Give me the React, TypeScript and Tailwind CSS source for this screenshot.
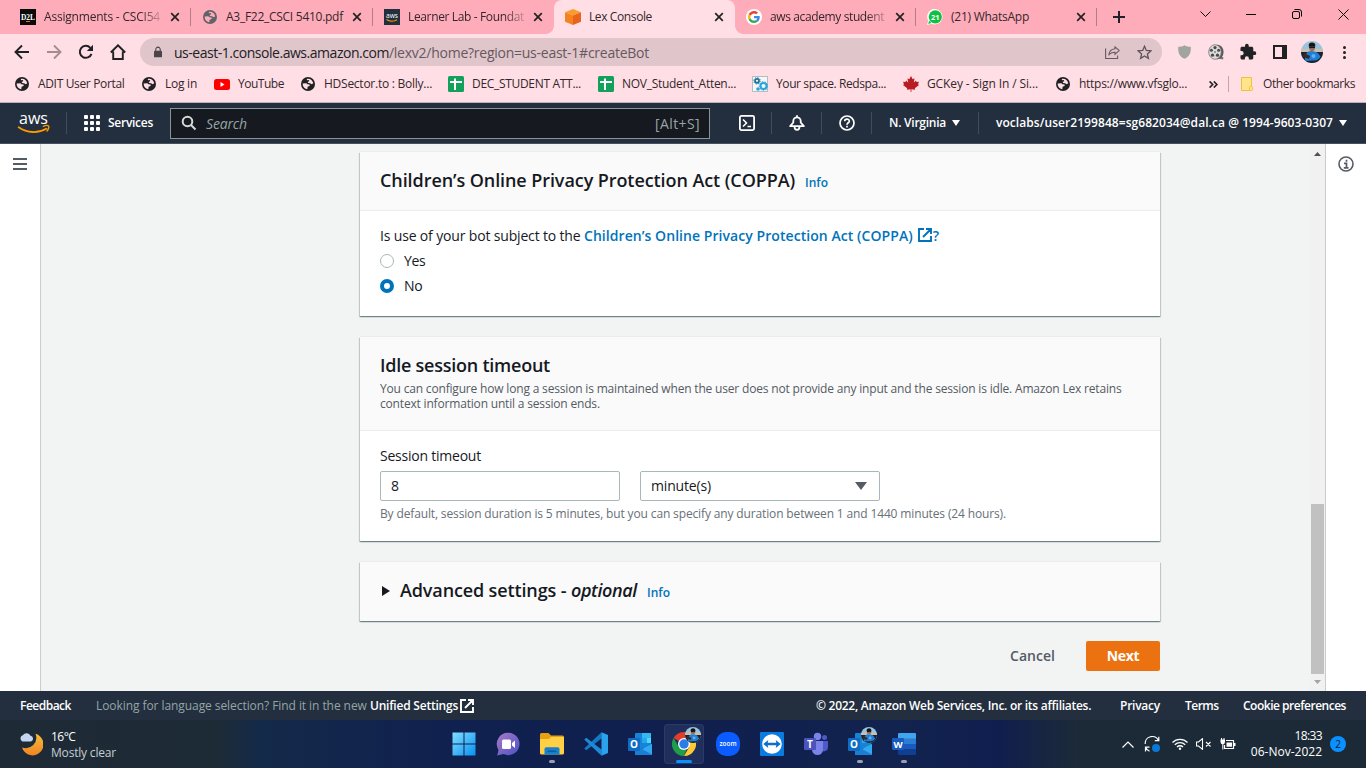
import type { ReactNode } from "react";

type Kid = { children?: ReactNode };

/* ---------- browser icons ---------- */

const Globe = ({ className = "text-[#202124]", land = "#ffdfe5" }: { className?: string; land?: string }) => (
  <svg className={`size-[14px] shrink-0 ${className}`} viewBox="0 0 14 14">
    <circle cx="7" cy="7" r="7" fill="currentColor" />
    <path d="M1.700 6.600L5.200 6.200C6 6.200 6 7.200 6.800 7.300L8.300 7.500C9 7.700 8.900 8.800 8.300 9.100L6.600 9.700 6.300 12.200C3.500 12 1.500 9.500 1.700 6.600zM5.800 1.900C9 1.300 11.700 3.300 12.200 6.200L10.800 7.200 9 6.300 7.300 6C6.600 5.700 6.700 4.700 7.400 4.500L8.300 4.200 7.900 3.100 6 3.300z" fill={land} />
  </svg>
);

const CloseX = () => (
  <svg className="size-2.5 shrink-0" viewBox="0 0 10 10" stroke="#222" strokeWidth="1.7">
    <path d="M1.200 1.200l7.600 7.600M8.800 1.200L1.200 8.800" />
  </svg>
);

const AwsMark = ({ className }: { className: string }) => (
  <svg className={`overflow-visible ${className}`} viewBox="0 0 32 22">
    <text x="1" y="12" textLength="29" lengthAdjust="spacingAndGlyphs" fontSize="16.500" fontWeight="500" fontFamily="Open Sans, sans-serif" fill="#fff">aws</text>
    <path d="M0.700 15.300c8.500 6 19.500 6.200 27.600 1.500" fill="none" stroke="#f90" strokeWidth="1.900" strokeLinecap="round" />
    <path d="M25.300 14.300c2-.9 4.600-.9 5.300-.2.600.8-.1 3.400-1.600 5" fill="none" stroke="#f90" strokeWidth="1.400" strokeLinecap="round" />
  </svg>
);

const D2L = () => (
  <svg className="size-4 shrink-0 overflow-visible" viewBox="0 0 16 16">
    <rect width="16" height="16" fill="#0a0a0a" />
    <text x="1" y="11" textLength="14" lengthAdjust="spacingAndGlyphs" fontSize="8.500" fontWeight="700" fontFamily="Liberation Serif, serif" fill="#fff">D2L</text>
    <rect x="6" y="12" width="4" height="1" fill="#e87511" />
  </svg>
);

const AwsTile = () => (
  <svg className="size-4 shrink-0" viewBox="0 0 16 16">
    <rect width="16" height="16" fill="#232f3e" />
    <text x="2" y="8.500" textLength="12" lengthAdjust="spacingAndGlyphs" fontSize="7" fontFamily="Open Sans, sans-serif" fill="#fff">aws</text>
    <path d="M2.500 10.500c3 2.200 7.500 2.200 10.500.3" fill="none" stroke="#f90" strokeWidth="1.200" />
  </svg>
);

const Cube = () => (
  <svg className="size-4 shrink-0" viewBox="0 0 16 16">
    <path d="M8 0l8 3.200L8 6.400 0 3.200z" fill="#fa9b2c" />
    <path d="M0 3.200l8 3.200V16l-8-3.200z" fill="#f58220" />
    <path d="M16 3.200L8 6.400V16l8-3.200z" fill="#e8631c" />
  </svg>
);

const Google = () => (
  <svg className="size-4 shrink-0" viewBox="0 0 16 16">
    <circle cx="8" cy="8" r="8" fill="#fff" />
    <g transform="translate(2 2) scale(.25)">
      <path fill="#EA4335" d="M24 9.500c3.540 0 6.710 1.220 9.210 3.600l6.850-6.850C35.900 2.380 30.470 0 24 0 14.620 0 6.510 5.380 2.560 13.220l7.980 6.190C12.430 13.720 17.740 9.500 24 9.500z" />
      <path fill="#4285F4" d="M46.980 24.550c0-1.570-.15-3.090-.38-4.550H24v9.020h12.940c-.58 2.960-2.260 5.480-4.780 7.180l7.730 6c4.510-4.180 7.090-10.360 7.090-17.650z" />
      <path fill="#FBBC05" d="M10.530 28.590c-.48-1.450-.76-2.990-.76-4.590s.27-3.140.76-4.590l-7.980-6.190C.92 16.460 0 20.120 0 24c0 3.880.92 7.540 2.560 10.780l7.970-6.190z" />
      <path fill="#34A853" d="M24 48c6.480 0 11.930-2.130 15.890-5.810l-7.730-6c-2.150 1.450-4.920 2.300-8.160 2.300-6.260 0-11.570-4.220-13.470-9.910l-7.980 6.190C6.510 42.620 14.620 48 24 48z" />
    </g>
  </svg>
);

const WhatsApp = () => (
  <svg className="size-4 shrink-0" viewBox="0 0 16 16">
    <path d="M8.300 0a7.700 7.700 0 1 1-3.700 14.700L0 16l1.300-4.400A7.700 7.700 0 0 1 8.300 0z" fill="#fff" />
    <circle cx="8.300" cy="7.800" r="6.600" fill="#0fc143" />
    <path d="M1.200 14.900l1-3.300 2.200 2.400z" fill="#0fc143" />
    <text x="8.300" y="10.600" textAnchor="middle" fontSize="7.500" fontWeight="700" fontFamily="Open Sans, sans-serif" fill="#fff">21</text>
  </svg>
);

const Avatar = ({ className }: { className: string }) => (
  <svg className={className} viewBox="0 0 22 22">
    <defs><clipPath id="av"><circle cx="11" cy="11" r="11" /></clipPath></defs>
    <g clipPath="url(#av)">
      <rect width="22" height="22" fill="#9cc3dd" />
      <rect y="8" width="22" height="4" fill="#c9c0ae" />
      <rect y="11" width="22" height="11" fill="#1c2229" />
      <path d="M4 20c-.5-7 2-10 6.500-10s7.500 2 9 6c-2 3-5 3.500-7 3.500z" fill="#1f7fd6" />
      <path d="M3 12l6 3-1 3-6-2z" fill="#3a2a25" />
      <ellipse cx="11" cy="6.500" rx="3" ry="3.700" fill="#a3705a" />
      <path d="M7.700 5.500C7.500 2.600 9 1.600 11 1.600s3.600 1 3.300 3.900z" fill="#161412" />
      <rect x="8.200" y="5.500" width="5.800" height="1.600" fill="#17181c" />
      <circle cx="12.500" cy="15" r="2" fill="#5fb2f2" />
    </g>
  </svg>
);

const Sheet = () => (
  <svg className="size-4 shrink-0" viewBox="0 0 16 16">
    <rect width="16" height="16" rx="1.500" fill="#12a15b" />
    <path d="M2 6h12M7 2.500v11.500" stroke="#fff" strokeWidth="2" />
  </svg>
);

/* ---------- browser chrome ---------- */

const Tab = ({ className, icon, children, fade }: Kid & { className: string; icon: ReactNode; fade?: boolean }) => (
  <div className={`flex h-[34px] shrink-0 items-center pr-[11px] text-[12px] text-[#33272b] ${className}`}>
    <span className="flex w-4 shrink-0 justify-center">{icon}</span>
    <span className={`ml-2 flex-1 overflow-hidden whitespace-nowrap ${fade ? "[mask-image:linear-gradient(90deg,#000_96px,transparent_122px)]" : ""}`}>{children}</span>
    <CloseX />
  </div>
);

const TabStrip = () => (
  <div className="flex h-[34px] bg-[#ffacba]">
    <Tab className="relative w-[191px] pl-5 after:absolute after:right-0 after:top-2 after:h-[18px] after:w-px after:bg-[#b37c86]" icon={<D2L />} fade>
      <span className="tracking-[-0.2px]">Assignments - CSCI54</span>
    </Tab>
    <Tab className="relative w-[182px] pl-[11px] after:absolute after:right-0 after:top-2 after:h-[18px] after:w-px after:bg-[#b37c86]" icon={<Globe className="text-[#5f6368]" land="#ffacba" />}>
      <span className="tracking-[-0.27px]">A3_F22_CSCI 5410.pdf</span>
    </Tab>
    <Tab className="w-[181px] pl-[11px]" icon={<AwsTile />} fade>
      <span className="tracking-[-0.36px]">Learner Lab - Foundat</span>
    </Tab>
    <div className="relative flex">
      <Tab className="w-[181px] rounded-t-lg bg-[#ffdfe5] pl-[11px]" icon={<Cube />}>
        <span className="tracking-[-0.39px]">Lex Console</span>
      </Tab>
      <span className="absolute -left-2 bottom-0 size-2 bg-[radial-gradient(circle_at_0_0,#ffacba_7.5px,#ffdfe5_8px)]" />
      <span className="absolute -right-2 bottom-0 size-2 bg-[radial-gradient(circle_at_100%_0,#ffacba_7.5px,#ffdfe5_8px)]" />
    </div>
    <Tab className="relative w-[181px] pl-[11px] after:absolute after:right-0 after:top-2 after:h-[18px] after:w-px after:bg-[#b37c86]" icon={<Google />} fade>
      <span className="tracking-[-0.38px]">aws academy student</span>
    </Tab>
    <Tab className="relative w-[181px] pl-[11px] after:absolute after:right-0 after:top-2 after:h-[18px] after:w-px after:bg-[#b37c86]" icon={<WhatsApp />}>
      <span className="tracking-[-0.25px]">(21) WhatsApp</span>
    </Tab>
    <div className="flex w-11 items-center justify-center">
      <svg className="size-3" viewBox="0 0 12 12" stroke="#202124" strokeWidth="2"><path d="M6 0v12M0 6h12" /></svg>
    </div>
    <div className="ml-auto flex h-[28px] items-center text-black">
      <span className="flex w-[46px] justify-center"><svg className="h-1.5 w-[11px]" viewBox="0 0 11 6" fill="none" stroke="currentColor"><path d="M.5.5l5 5 5-5" /></svg></span>
      <span className="flex w-[46px] justify-center"><span className="h-px w-[10px] bg-black" /></span>
      <span className="flex w-[46px] justify-center">
        <svg className="size-[10px]" viewBox="0 0 10 10" fill="none" stroke="currentColor"><rect x=".5" y="2.500" width="7" height="7" rx="1.500" /><path d="M2.500.5H7A2.500 2.500 0 0 1 9.500 3v4.500" /></svg>
      </span>
      <span className="flex w-[46px] justify-center"><svg className="size-[11px]" viewBox="0 0 11 11" stroke="currentColor"><path d="M.5.5l10 10M10.500.5l-10 10" /></svg></span>
    </div>
  </div>
);

const Cell = ({ children }: Kid) => <span className="flex w-8 shrink-0 items-center justify-center">{children}</span>;

const Toolbar = () => (
  <div className="flex h-9 items-center pl-1.5 text-[#202124]">
    <Cell><svg className="size-4" viewBox="0 0 16 16" fill="none" stroke="currentColor" strokeWidth="1.900"><path d="M15 8H2M8 1.500L1.500 8 8 14.500" /></svg></Cell>
    <Cell><svg className="size-4 text-[#a38d92]" viewBox="0 0 16 16" fill="none" stroke="currentColor" strokeWidth="1.900"><path d="M1 8h13M8 1.500L14.500 8 8 14.500" /></svg></Cell>
    <Cell><svg className="size-4" viewBox="0 0 16 16"><path d="M13.500 9.800A6 6 0 1 1 12.300 3.800" fill="none" stroke="currentColor" strokeWidth="2" /><path d="M15 .8V7H8.800z" fill="currentColor" /></svg></Cell>
    <Cell><svg className="size-4" viewBox="0 0 16 16" fill="none" stroke="currentColor" strokeWidth="1.900"><path d="M.8 8.500L8 1.300l7.200 7.200M3.200 7.500V15h9.600V7.500" /></svg></Cell>
    <div className="ml-1.5 flex h-7 w-[622px] flex-1 items-center rounded-full bg-[#e0c5cb] pl-3.5">
      <svg className="h-3 w-2" viewBox="0 0 9 12"><rect y="4.500" width="9" height="7.500" rx="1" fill="#4a4548" /><path d="M2 5V3a2.500 2.500 0 0 1 5 0v2" fill="none" stroke="#4a4548" strokeWidth="1.200" /></svg>
      <span className="ml-3 whitespace-nowrap text-[14px] tracking-[-0.47px] text-[#202124]">us-east-1.console.aws.amazon.com</span>
      <span className="whitespace-nowrap text-[14px] tracking-[-0.25px] text-[#66595d]">/lexv2/home?region=us-east-1#createBot</span>
      <span className="ml-auto flex pr-0.5">
        <Cell><svg className="h-[13px] w-[15px]" viewBox="0 0 15 13" fill="none" stroke="#66595d"><path d="M.6 2.500v10h12v-3M10 .8l4.300 3.700L10 8.300V6.200C7 6.200 5 7.200 3.700 9.300 4 6 6 3.200 10 2.800z" strokeWidth="1.100" /></svg></Cell>
        <Cell><svg className="size-[15px]" viewBox="0 0 15 15" fill="none" stroke="#5e5357" strokeWidth="1.300"><path d="M7.500 1.300l1.800 4.200 4.500.4-3.400 3 1 4.500-3.900-2.400-3.900 2.400 1-4.500-3.400-3 4.500-.4z" /></svg></Cell>
      </span>
    </div>
    <span className="ml-1.5 flex pr-1.5">
      <Cell><svg className="h-[14px] w-[13px]" viewBox="0 0 13 14"><path d="M6.500.3C8.300 1.300 10.300 1.800 12.800 1.800c.3 5.700-1 9.700-6.300 12C1.200 11.500-.1 7.500.2 1.800 2.700 1.800 4.700 1.300 6.500.3z" fill="#a0a5a1" /></svg></Cell>
      <Cell>
        <svg className="size-4" viewBox="0 0 16 16">
          <path d="M12 12l3.500 1.500-.5 2-5-1z" fill="#777" />
          <ellipse cx="9.300" cy="8" rx="6.300" ry="7.300" fill="#5a5a5a" /><ellipse cx="7" cy="8" rx="6.300" ry="7.300" fill="#dadada" stroke="#666" strokeWidth=".7" />
          <g fill="#4a4a4a"><circle cx="7" cy="3.600" r="1.600" /><circle cx="3.400" cy="6.200" r="1.500" /><circle cx="10.600" cy="6.200" r="1.500" /><circle cx="4.500" cy="11.200" r="1.600" /><circle cx="9.500" cy="11.200" r="1.600" /><circle cx="7" cy="8" r=".8" /></g>
        </svg>
      </Cell>
      <Cell><svg className="size-[18px]" viewBox="0 0 24 24" fill="currentColor"><path d="M20.500 11H19V7c0-1.100-.9-2-2-2h-4V3.500a2.500 2.500 0 0 0-5 0V5H4c-1.100 0-2 .9-2 2v3.800h1.500a2.700 2.700 0 0 1 0 5.400H2V20c0 1.100.9 2 2 2h3.800v-1.500a2.700 2.700 0 0 1 5.400 0V22H17c1.100 0 2-.9 2-2v-4h1.500a2.500 2.500 0 0 0 0-5z" /></svg></Cell>
      <Cell><svg className="size-[14px]" viewBox="0 0 14 14"><rect x="1" y="1" width="12" height="12" fill="none" stroke="currentColor" strokeWidth="2" /><rect x="9" width="5" height="14" fill="currentColor" /></svg></Cell>
      <Cell><Avatar className="size-[22px]" /></Cell>
      <Cell><svg className="h-[13px] w-[3px]" viewBox="0 0 3 13" fill="currentColor"><circle cx="1.500" cy="1.500" r="1.500" /><circle cx="1.500" cy="6.500" r="1.500" /><circle cx="1.500" cy="11.500" r="1.500" /></svg></Cell>
    </span>
  </div>
);

const Bookmark = ({ className, icon, children }: Kid & { className: string; icon: ReactNode }) => (
  <div className={`flex shrink-0 items-center gap-2 whitespace-nowrap ${className}`}>
    <span className="flex w-4 justify-center">{icon}</span>
    {children}
  </div>
);

const Bookmarks = () => (
  <div className="flex h-[28px] items-center pl-[14px] text-[12px] text-[#33272b]">
    <Bookmark className="w-[127px]" icon={<Globe />}><span className="tracking-[-0.34px]">ADIT User Portal</span></Bookmark>
    <Bookmark className="w-[73px]" icon={<Globe />}><span className="tracking-[-0.25px]">Log in</span></Bookmark>
    <Bookmark className="w-[86px]" icon={<svg className="h-[11px] w-4" viewBox="0 0 16 11"><rect width="16" height="11" rx="2.500" fill="#f00" /><path d="M6.500 3v5l4-2.500z" fill="#fff" /></svg>}><span className="tracking-[-0.48px]">YouTube</span></Bookmark>
    <Bookmark className="w-[148px]" icon={<Globe />}><span className="tracking-[-0.25px]">HDSector.to : Bolly...</span></Bookmark>
    <Bookmark className="w-[150px]" icon={<Sheet />}><span className="tracking-[-0.31px]">DEC_STUDENT ATT...</span></Bookmark>
    <Bookmark className="w-[154px]" icon={<Sheet />}><span className="tracking-[-0.28px]">NOV_Student_Atten...</span></Bookmark>
    <Bookmark
      className="w-[151px]"
      icon={
        <svg className="size-4" viewBox="0 0 16 16"><rect x=".5" y=".5" width="15" height="15" fill="#f4f6f7" stroke="#b9bcbe" /><circle cx="5" cy="4.800" r="2" fill="none" stroke="#1d7399" strokeWidth="1.700" /><circle cx="5" cy="4.800" r="3.200" fill="none" stroke="#1d7399" strokeDasharray="1.200 1.300" /><circle cx="11.500" cy="10" r="3" fill="none" stroke="#2ba5df" strokeWidth="2" /><circle cx="11.500" cy="10" r="4.300" fill="none" stroke="#2ba5df" strokeDasharray="1.500 1.500" /><circle cx="6" cy="13" r="1.800" fill="#2ba5df" /></svg>
      }
    ><span className="tracking-[-0.4px]">Your space. Redspa...</span></Bookmark>
    <Bookmark className="w-[152px]" icon={<svg className="size-4" viewBox="0 0 16 16"><path d="M8 0l1.700 3.200 1.800-1-.7 4.300L13 4.600l.5 1.500 2.500-.3-1 2.500 1 .7-4.200 3.300.4 1.400-3.800-.5V16h-.8v-2.800l-3.800.5.4-1.400L0 9l1-.7-1-2.500 2.500.3.5-1.500 2.200 1.900-.7-4.300 1.800 1z" fill="#b81c22" /></svg>}><span className="tracking-[-0.11px]">GCKey - Sign In / Si...</span></Bookmark>
    <Bookmark className="w-[149px]" icon={<Globe />}><span className="tracking-[-0.28px]">https://www.vfsglo...</span></Bookmark>
    <span className="ml-[5px] flex w-5 items-center">
      <svg className="h-[7px] w-[9px]" viewBox="0 0 9 7" fill="none" stroke="#202124" strokeWidth="1.600"><path d="M.6.4L3.700 3.500.6 6.600M4.800.4l3.100 3.100-3.100 3.100" /></svg>
    </span>
    <span className="ml-[-1px] h-4 w-px bg-[#c7a4ab]" />
    <svg className="ml-3 h-[14px] w-3" viewBox="0 0 12 14"><path d="M.5.5h10v13H.5z" fill="#ffe48a" stroke="#e9c33f" /><rect x="8.500" y="9.500" width="3" height="4" rx="1" fill="#ffe48a" stroke="#e9c33f" /></svg>
    <span className="ml-2.5 whitespace-nowrap tracking-[-0.44px]">Other bookmarks</span>
  </div>
);

/* ---------- console ---------- */

const Divider = () => <span className="h-[22px] w-px shrink-0 bg-[#414d5c]" />;
const Caret = () => <svg className="h-[6px] w-2" viewBox="0 0 8 6"><path d="M0 0h8L4 6z" fill="#fff" /></svg>;

const NavBar = () => (
  <div className="flex h-[41px] shrink-0 items-center border-b border-[#45505f] bg-[#232f3e] text-[12px] font-semibold text-white">
    <AwsMark className="ml-[18px] h-[22px] w-8" />
    <span className="ml-4 flex"><Divider /></span>
    <span className="ml-[17px] grid grid-cols-3 gap-0.5">
      {Array.from({ length: 9 }, (_, i) => <span key={i} className="size-1 rounded-[1px] bg-white" />)}
    </span>
    <span className="ml-2 w-[45px] tracking-[-0.27px]">Services</span>
    <div className="ml-[17px] flex h-[31px] w-[540px] items-center border border-[#879596] bg-[#16191f] px-[10px] text-[14px] font-normal text-[#95a5a6]">
      <svg className="size-4" viewBox="0 0 16 16" fill="none" stroke="#d5dbdb" strokeWidth="2"><circle cx="6.500" cy="6.500" r="4.800" /><path d="M10 10l4.500 4.500" /></svg>
      <span className="ml-[9px] italic tracking-[-0.15px]">Search</span>
      <span className="-mr-px ml-auto tracking-[0.4px]">[Alt+S]</span>
    </div>
    <svg className="ml-[29px] size-4" viewBox="0 0 16 16" fill="none" stroke="#fff" strokeWidth="1.800"><rect x=".9" y=".9" width="14.200" height="14.200" rx="1.500" /><path d="M4 4.500L7.500 8 4 11.500M8.500 11.500H12" strokeWidth="1.600" /></svg>
    <span className="ml-4 flex"><Divider /></span>
    <svg className="ml-[17px] size-4" viewBox="0 0 16 16" fill="none" stroke="#fff" strokeWidth="1.800" strokeLinejoin="round"><path d="M8 .3v2M1.200 11.200L4.300 7.500V6a3.700 3.700 0 0 1 7.400 0v1.500l3.100 3.700zM5.500 11.500c0 4.400 5 4.400 5 0" /></svg>
    <span className="ml-4 flex"><Divider /></span>
    <svg className="ml-[17px] size-4" viewBox="0 0 16 16" fill="none" stroke="#fff" strokeWidth="1.700"><circle cx="8" cy="8" r="7" /><path d="M5.700 6.300C5.700 3.500 10.300 3.500 10.300 6.200 10.300 7.800 8 7.800 8 9.700M8 10.800v1.700" /></svg>
    <span className="ml-4 flex"><Divider /></span>
    <span className="ml-[17px] w-[57px] whitespace-nowrap tracking-[-0.25px]">N. Virginia</span>
    <span className="ml-1.5"><Caret /></span>
    <span className="ml-[18px] flex"><Divider /></span>
    <span className="ml-[17px] w-[337px] whitespace-nowrap tracking-[0.06px]">voclabs/user2199848=sg682034@dal.ca @ 1994-9603-0307</span>
    <span className="ml-1.5"><Caret /></span>
  </div>
);

const Card = ({ className, children }: Kid & { className: string }) => (
  <section className={`w-[800px] shadow-[0_-1px_0_0_#eaeded,0_1px_1px_0_rgba(0,28,36,0.35),1px_1px_1px_0_rgba(0,28,36,0.15),-1px_1px_1px_0_rgba(0,28,36,0.15)] ${className}`}>{children}</section>
);

const Info = ({ className }: { className: string }) => <a className={`text-[12px] font-semibold text-[#0073bb] ${className}`}>Info</a>;

const External = ({ className }: { className: string }) => (
  <svg className={className} viewBox="0 0 14 14" fill="none" stroke="currentColor" strokeWidth="1.900"><path d="M6 1H1v12h12V8M8 1h5v5M13 1L5 9" /></svg>
);

const Content = () => (
  <div className="flex w-[1269px] flex-col items-start bg-[#f2f4f4] pl-[319px] pt-2 text-[14px] text-[#16191f]">
    <Card className="h-[164px] bg-white">
      <div className="flex h-[59px] items-center border-b border-[#eaeded] bg-[#fafafa] px-5 pb-px text-[18px] font-semibold">
        <h2 className="w-[425px] whitespace-nowrap tracking-[-0.08px]">Children’s Online Privacy Protection Act (COPPA)</h2>
        <Info className="mt-[5px]" />
      </div>
      <div className="px-5 pt-[13px]">
        <div className="flex h-[22px] items-center whitespace-pre">
          <span className="tracking-[-0.16px]">Is use of your bot subject to the </span>
          <a className="flex items-center font-semibold tracking-[0.06px] text-[#0073bb]">Children’s Online Privacy Protection Act (COPPA)<External className="ml-[5px] mr-px size-[14px]" />?</a>
        </div>
        <div className="mt-0.5 flex h-[25px] items-center">
          <span className="size-[14px] rounded-full border border-[#aab7b8]" /><span className="ml-[10px] tracking-[-0.4px]">Yes</span>
        </div>
        <div className="flex h-[25px] items-center">
          <span className="size-[14px] rounded-full border-4 border-[#0073bb]" /><span className="ml-[10px] tracking-[-0.4px]">No</span>
        </div>
      </div>
    </Card>

    <Card className="mt-[21px] h-[204px] bg-white">
      <div className="h-[94px] border-b border-[#eaeded] bg-[#fafafa] px-5 pt-4">
        <h2 className="text-[18px] font-semibold leading-[24px] tracking-[-0.24px]">Idle session timeout</h2>
        <p className="mt-[4px] whitespace-nowrap text-[12px] leading-[15px] tracking-[-0.18px] text-[#545b64]">
          You can configure how long a session is maintained when the user does not provide any input and the session is idle. Amazon Lex retains
          <br />
          context information until a session ends.
        </p>
      </div>
      <div className="px-5 pt-[14px]">
        <label className="block leading-[22px] tracking-[-0.23px]">Session timeout</label>
        <div className="mt-[4px] flex gap-5">
          <div className="flex h-[30px] w-60 items-center rounded-[2px] border border-[#aab7b8] px-[10px] pb-0.5">8</div>
          <div className="flex h-[30px] w-60 items-center justify-between rounded-[2px] border border-[#aab7b8] pl-[10px] pr-3">
            <span className="pb-0.5 tracking-[-0.16px]">minute(s)</span>
            <svg className="h-2 w-[12px]" viewBox="0 0 12 8"><path d="M0 0h12L6 8z" fill="#545b64" /></svg>
          </div>
        </div>
        <p className="mt-1 whitespace-nowrap text-[12px] leading-[18px] tracking-[-0.14px] text-[#687078]">By default, session duration is 5 minutes, but you can specify any duration between 1 and 1440 minutes (24 hours).</p>
      </div>
    </Card>

    <Card className="mt-[21px] flex h-[59px] items-center bg-[#fafafa] px-5 pb-0.5">
      <svg className="ml-[2px] h-[10px] w-2" viewBox="0 0 8 10"><path d="M0 0l8 5-8 5z" fill="#16191f" /></svg>
      <h2 className="ml-[10px] flex w-[247px] whitespace-pre text-[18px] font-semibold tracking-[-0.13px]">Advanced settings - <i className="tracking-[-0.36px]">optional</i></h2>
      <Info className="mt-1" />
    </Card>

    <div className="mt-5 flex w-[800px] items-center justify-end text-[14px] font-semibold">
      <button className="pb-px tracking-[0.03px] text-[#545b64]">Cancel</button>
      <button className="ml-[31px] h-[30px] w-[74px] rounded-[2px] bg-[#ec7211] pb-0.5 font-bold tracking-[-0.35px] text-white">Next</button>
    </div>
  </div>
);

const Main = () => (
  <div className="flex h-[547px]">
    <div className="flex w-[41px] justify-center border-r border-[#c9cfcf] bg-white pt-[14px]">
      <svg className="h-3 w-[14px]" viewBox="0 0 14 12"><path d="M0 1h14M0 6h14M0 11h14" stroke="#545b64" strokeWidth="2" /></svg>
    </div>
    <Content />
    <div className="flex w-4 flex-col items-center border-r border-[#c8cccc] bg-[#f1f1f1] pb-[7px] pt-2">
      <svg className="h-1 w-[7px]" viewBox="0 0 7 4"><path d="M0 4h7L3.500 0z" fill="#505050" /></svg>
      <div className="mt-auto h-[170px] w-[13px] bg-[#c1c1c1]" />
      <svg className="mt-1.5 h-1 w-[7px]" viewBox="0 0 7 4"><path d="M0 0h7L3.500 4z" fill="#a3a3a3" /></svg>
    </div>
    <div className="flex flex-1 justify-center bg-white pt-3">
      <svg className="size-4" viewBox="0 0 16 16" fill="none" stroke="#545b64"><circle cx="8" cy="8" r="7" strokeWidth="1.600" /><path d="M8.500 3.700v2M6 7.300h2.500v3.900M5.800 11.800h4.700" strokeWidth="1.700" /></svg>
    </div>
  </div>
);

const Footer = () => (
  <div className="flex h-[29px] items-center whitespace-pre bg-[#232f3e] pl-5 text-[12px] font-semibold text-white">
    <span className="w-[76px] tracking-[-0.5px]">Feedback</span>
    <span className="w-[274px] font-normal tracking-[-0.07px] text-[#95a5a6]">Looking for language selection? Find it in the new </span>
    <span className="w-[90px] tracking-[-0.22px]">Unified Settings</span>
    <External className="size-[14px]" />
    <span className="ml-[342px] w-[304px] tracking-[-0.27px]">© 2022, Amazon Web Services, Inc. or its affiliates.</span>
    <span className="w-[65px] tracking-[-0.24px]">Privacy</span>
    <span className="w-[58px] tracking-[-0.5px]">Terms</span>
    <span className="tracking-[-0.49px]">Cookie preferences</span>
  </div>
);

/* ---------- taskbar ---------- */

const App44 = ({ children, active, mark }: Kid & { active?: boolean; mark?: boolean }) => (
  <div className="flex w-11 shrink-0 justify-center">
    <div className={`relative flex size-10 items-center justify-center rounded ${active ? "bg-[#1f2e5a] ring-1 ring-inset ring-[#2c3b66]" : ""}`}>
      {children}
      {active && <span className="absolute bottom-px h-[3px] w-4 rounded-full bg-[#0a90ff]" />}
      {mark && <span className="absolute bottom-px h-[3px] w-1.5 rounded-full bg-[#9aa0b2]" />}
    </div>
  </div>
);

const Outlook = () => (
  <svg className="size-6" viewBox="0 0 24 24">
    <rect x="7" y="1" width="16" height="15" rx="1" fill="#1583d8" />
    <rect x="14" y="1" width="9" height="5" fill="#35b8f1" /><rect x="14" y="6" width="5" height="5" fill="#28a8ea" /><rect x="19" y="6" width="4" height="5" fill="#50d9ff" />
    <path d="M7 11l8.500 6L24 11.500V23H7z" fill="#1a7fd4" /><path d="M24 12v10.500L14 17z" fill="#32a9ee" />
    <rect y="6" width="12" height="13" rx="1" fill="#0f6cc4" />
    <text x="6" y="16" textAnchor="middle" fontSize="10" fontWeight="700" fontFamily="Open Sans, sans-serif" fill="#fff">O</text>
  </svg>
);

const TaskApps = () => (
  <>
    <App44>
      <svg className="size-6" viewBox="0 0 24 24"><defs><linearGradient id="win" x1="0" y1="0" x2="1" y2="1"><stop stopColor="#7fe0ff" /><stop offset="1" stopColor="#0a8ff0" /></linearGradient></defs><path d="M.5.5h11v11H.5zM12.500.5h11v11h-11zM.5 12.500h11v11H.5zM12.500 12.500h11v11h-11z" fill="url(#win)" /></svg>
    </App44>
    <App44>
      <svg className="size-6" viewBox="0 0 24 24"><defs><linearGradient id="chat" x1="0" y1="0" x2="1" y2="1"><stop stopColor="#a97bc4" /><stop offset="1" stopColor="#4a50c8" /></linearGradient></defs><path d="M12.500.8a11.200 11.200 0 1 1-5 21.300L1.200 23.400l1.300-5.500A11.200 11.200 0 0 1 12.500.8z" fill="url(#chat)" /><rect x="6" y="7.500" width="9" height="9.500" rx="1.500" fill="#fff" /><path d="M16 11l3-2.500v7.500l-3-2.500z" fill="#fff" /></svg>
    </App44>
    <App44 mark>
      <svg className="size-6" viewBox="0 0 24 24"><path d="M0 2.500A1.500 1.500 0 0 1 1.500 1h7L11 3.500h11.500A1.500 1.500 0 0 1 24 5v5H0z" fill="#e7a010" /><path d="M0 7h9l2-2h13v16a1.500 1.500 0 0 1-1.500 1.500h-21A1.500 1.500 0 0 1 0 21z" fill="#ffcf46" /><path d="M4.500 22.500V17A1.700 1.700 0 0 1 6.200 15.300h11.600a1.700 1.700 0 0 1 1.700 1.700v5.500z" fill="#1680cf" /><rect x="7.500" y="18.500" width="9" height="1.500" rx=".7" fill="#0b5c9f" /></svg>
    </App44>
    <App44>
      <svg className="size-6" viewBox="0 0 24 24"><path d="M17.800 6.200L2.300 18.300.2 16.400 17.500.3z" fill="#1478c4" /><path d="M17.800 17.800L2.300 5.700.2 7.600l17.300 16.100z" fill="#1b8ad8" /><path d="M17.500.3L24 3v18l-6.500 2.700z" fill="#2aa3ec" /></svg>
    </App44>
    <App44><Outlook /></App44>
    <App44 active>
      <svg className="size-6" viewBox="0 0 24 24">
        <path d="M12 12L1.600 6A12 12 0 0 1 22.400 6z" fill="#e33b2e" /><path d="M12 12V6h10.400A12 12 0 0 1 12 24l5.200-9z" fill="#fcc934" /><path d="M1.600 6l5.200 9 5.200 3 2.500-.5L12 24A12 12 0 0 1 1.600 6z" fill="#1e9e4a" /><circle cx="12" cy="12" r="6" fill="#fff" /><circle cx="12" cy="12" r="4.700" fill="#2a7de9" />
      </svg>
      <Avatar className="absolute right-[3px] top-[3px] size-4" />
    </App44>
    <App44>
      <svg className="size-6" viewBox="0 0 24 24"><rect width="24" height="24" rx="10" fill="#0b5cff" /><text x="3.500" y="14" textLength="17" lengthAdjust="spacingAndGlyphs" fontSize="6.500" fontWeight="600" fontFamily="Open Sans, sans-serif" fill="#fff">zoom</text></svg>
    </App44>
    <App44>
      <svg className="size-6" viewBox="0 0 24 24"><rect width="24" height="24" rx="1" fill="#0a7be0" /><circle cx="12" cy="12" r="9.800" fill="#fff" /><path d="M3.300 12L8.300 8l-.6 2.700h8.600L15.700 8l5 4-5 4 .6-2.700H7.700l.6 2.700z" fill="#0a6fca" /></svg>
    </App44>
    <App44>
      <svg className="size-6" viewBox="0 0 24 24"><circle cx="20.500" cy="5.500" r="2.500" fill="#5059c9" /><circle cx="13.500" cy="4.500" r="3.700" fill="#7b83eb" /><path d="M17 9h7v6.500a4 4 0 0 1-7 2.500z" fill="#5059c9" /><path d="M8 9h11v8.500a5.500 5.500 0 0 1-11 0z" fill="#7b83eb" /><rect y="6" width="12" height="12" rx="1" fill="#4b53bc" /><text x="6" y="15.500" textAnchor="middle" fontSize="10" fontWeight="700" fontFamily="Open Sans, sans-serif" fill="#fff">T</text></svg>
    </App44>
    <App44 mark><Outlook /><Avatar className="absolute right-[3px] top-[3px] size-4" /></App44>
    <App44 mark>
      <svg className="size-6" viewBox="0 0 24 24"><path d="M6 2a1 1 0 0 1 1-1h16a1 1 0 0 1 1 1v5H6z" fill="#41a5ee" /><path d="M6 6.500h18V12H6z" fill="#2b7cd3" /><path d="M6 12h18v5.500H6z" fill="#185abd" /><path d="M6 17.500h18V22a1 1 0 0 1-1 1H7a1 1 0 0 1-1-1z" fill="#103f91" /><rect y="6" width="12" height="12" rx="1" fill="#185abd" /><text x="6" y="15.500" textAnchor="middle" fontSize="9.500" fontWeight="700" fontFamily="Open Sans, sans-serif" fill="#fff">W</text></svg>
    </App44>
  </>
);

const Taskbar = () => (
  <div className="flex h-12 items-center bg-[linear-gradient(90deg,#1e2a36_0%,#1d2b37_16%,#142a49_19%,#10214f_32%,#101f4e_50%,#12234f_66%,#101e4f_73%,#1c2a38_79%,#1c2a37_100%)] text-[12px] text-white">
    <svg className="ml-[19px] size-6" viewBox="0 0 24 24"><defs><linearGradient id="moon" x1="0" y1="0" x2="0" y2="1"><stop stopColor="#f6bd3c" /><stop offset="1" stopColor="#f08423" /></linearGradient></defs><path d="M16.500 1.800A11 11 0 1 1 3 15.500 10.500 10.500 0 0 0 16.500 1.800z" fill="url(#moon)" /><path d="M3.500 9.500a3.300 3.300 0 0 1 .3-6.200A4.500 4.500 0 0 1 11.500 3.700 3 3 0 0 1 12 9.500z" fill="#c5d6f3" /></svg>
    <div className="ml-2 w-[391px] pt-0.5 leading-4">
      <div className="tracking-[-0.5px]">16°C</div>
      <div className="tracking-[-0.19px] text-[#c7cdd3]">Mostly clear</div>
    </div>
    <TaskApps />
    <svg className="ml-[196px] h-[7px] w-3" viewBox="0 0 12 7" fill="none" stroke="#fff" strokeWidth="1.200"><path d="M.5 6.500l5.500-5.500 5.500 5.500" /></svg>
    <svg className="ml-[10px] size-4" viewBox="0 0 16 16" fill="none" stroke="#fff" strokeWidth="1.200"><path d="M1.200 8A7 7 0 0 1 14.500 4.500M14.800.7v4h-4M5.500 15.200A7 7 0 0 1 1.700 11.500M1.500 15.500v-4.300h4" /><circle cx="12" cy="12" r="4" fill="#0a78d6" stroke="none" /></svg>
    <svg className="ml-3 h-[12px] w-4" viewBox="0 0 16 12" fill="none" stroke="#fff" strokeWidth="1.300"><path d="M.5 4.500a10.500 10.500 0 0 1 15 0M2.800 6.800a7.300 7.300 0 0 1 10.400 0M5 9a4.200 4.200 0 0 1 6 0" /><circle cx="8" cy="10.700" r="1.200" fill="#fff" stroke="none" /></svg>
    <svg className="ml-2 h-3 w-4" viewBox="0 0 16 12" fill="none" stroke="#fff"><path d="M.5 4h2L6.500.7v10.600L2.500 8h-2zM10 4l4.500 4.500M14.500 4L10 8.500" strokeWidth="1.100" /></svg>
    <svg className="ml-2 h-3 w-4" viewBox="0 0 16 12" fill="none" stroke="#fff"><path d="M6 2.500h7.500v8H4.500V7" strokeWidth="1.200" /><path d="M6.500 4.500H12v4.300H6.500zM14 5h1.500v3H14zM.5 1.500H5V4a2 2 0 0 1-4.500 0z" fill="#fff" stroke="none" /><path d="M1.500 0v2M4 0v2M2.800 5v6.500" /></svg>
    <div className="ml-auto text-right leading-4">
      <div className="tracking-[-0.6px]">18:33</div>
      <div>06-Nov-2022</div>
    </div>
    <span className="ml-2 mr-5 flex size-4 items-center justify-center rounded-full bg-[#0a90ff] text-[10px] text-[#0b1c30]">2</span>
  </div>
);

export default function App() {
  return (
    <div className="h-[768px] w-[1366px] overflow-hidden font-['Open_Sans',sans-serif]">
      <div className="h-[103px] border-b border-[#b9b2b8] bg-[#ffdfe5]">
        <TabStrip />
        <Toolbar />
        <Bookmarks />
      </div>
      <NavBar />
      <Main />
      <Footer />
      <Taskbar />
    </div>
  );
}
